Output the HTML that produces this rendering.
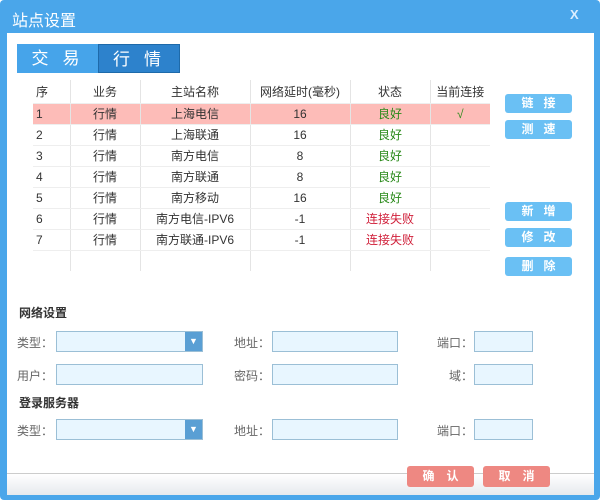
<!DOCTYPE html>
<html><head><meta charset="utf-8"><style>
*{margin:0;padding:0;box-sizing:border-box}
body{width:600px;height:500px;overflow:hidden;font-family:"Liberation Sans","Noto Sans CJK SC",sans-serif;font-size:12px;color:#333;background:#fff;position:relative}
.win{position:absolute;left:0;top:0;width:600px;height:500px;background:#4aa6ea;border-radius:4px}
.title{position:absolute;left:12px;top:7px;color:#fff;font-size:16px}
.x{position:absolute;left:570px;top:7px;color:#dbeeff;font-size:13px;font-weight:bold}
.body{position:absolute;left:7px;top:33px;width:587px;height:440px;background:#fff}
.foot{position:absolute;left:7px;top:473px;width:587px;height:22px;background:linear-gradient(#fff,#e6eaee);border-top:1px solid #ccc}
.a{position:absolute}
.tab{position:absolute;top:44px;height:29px;color:#fff;font-size:17px;text-align:center;line-height:29px;letter-spacing:14px;padding-left:10px}
table{position:absolute;left:33px;top:80px;border-collapse:collapse}
td{height:21px;text-align:center;border-left:1px solid #e4e4e4;border-bottom:1px solid #eee;font-size:12px;padding:0}
td:first-child{text-align:left;border-left:none;padding-left:3px}
tr.h td{height:23px}
tr.s td{background:#fdbcb8}
.g{color:#2a8a1a}.r{color:#d0203a}
.btn{position:absolute;left:505px;width:67px;height:19px;background:#6ac0f4;border-radius:3px;color:#fff;font-weight:bold;text-align:center;line-height:19px;letter-spacing:10px;padding-left:10px}
.lab{position:absolute;color:#666;font-size:12px}
.in{position:absolute;height:21px;background:#e8f6ff;border:1px solid #9bbfd6}
.dd{position:absolute;right:0;top:0;width:17px;height:19px;background:#5a9fd4;color:#fff;font-size:9px;text-align:center;line-height:19px}
.sec{position:absolute;left:19px;font-weight:bold;font-size:12px;color:#333}
.fb{position:absolute;top:466px;width:67px;height:21px;background:#ee8882;border-radius:3px;color:#fff;font-weight:bold;text-align:center;line-height:21px;letter-spacing:12px;padding-left:12px}
</style></head><body>
<div class="win"></div>
<div class="title">站点设置</div><div class="x">X</div>
<div class="body"></div>
<div class="foot"></div>
<div class="tab" style="left:17px;width:81px;background:#46a4ea">交易</div>
<div class="tab" style="left:98px;width:82px;background:#2d82cc;border:1px solid #1e6aaa">行情</div>
<table>
<tr class="h"><td style="width:37px">序</td><td style="width:70px">业务</td><td style="width:110px">主站名称</td><td style="width:100px">网络延时(毫秒)</td><td style="width:80px">状态</td><td style="width:60px">当前连接</td></tr>
<tr class="s"><td>1</td><td>行情</td><td>上海电信</td><td>16</td><td class="g">良好</td><td class="g">√</td></tr>
<tr><td>2</td><td>行情</td><td>上海联通</td><td>16</td><td class="g">良好</td><td></td></tr>
<tr><td>3</td><td>行情</td><td>南方电信</td><td>8</td><td class="g">良好</td><td></td></tr>
<tr><td>4</td><td>行情</td><td>南方联通</td><td>8</td><td class="g">良好</td><td></td></tr>
<tr><td>5</td><td>行情</td><td>南方移动</td><td>16</td><td class="g">良好</td><td></td></tr>
<tr><td>6</td><td>行情</td><td>南方电信-IPV6</td><td>-1</td><td class="r">连接失败</td><td></td></tr>
<tr><td>7</td><td>行情</td><td>南方联通-IPV6</td><td>-1</td><td class="r">连接失败</td><td></td></tr>
<tr><td style="height:20px;border-bottom:none"></td><td style="border-bottom:none"></td><td style="border-bottom:none"></td><td style="border-bottom:none"></td><td style="border-bottom:none"></td><td style="border-bottom:none"></td></tr>
</table>
<div class="btn" style="top:94px">链接</div>
<div class="btn" style="top:120px">测速</div>
<div class="btn" style="top:202px">新增</div>
<div class="btn" style="top:228px">修改</div>
<div class="btn" style="top:257px">删除</div>
<div class="sec" style="top:304px">网络设置</div>
<div class="lab" style="left:17px;top:334px">类型：</div><div class="in" style="left:56px;top:331px;width:147px"><div class="dd">▼</div></div>
<div class="lab" style="left:234px;top:334px">地址：</div><div class="in" style="left:272px;top:331px;width:126px"></div>
<div class="lab" style="left:437px;top:334px">端口：</div><div class="in" style="left:474px;top:331px;width:59px"></div>
<div class="lab" style="left:17px;top:367px">用户：</div><div class="in" style="left:56px;top:364px;width:147px"></div>
<div class="lab" style="left:234px;top:367px">密码：</div><div class="in" style="left:272px;top:364px;width:126px"></div>
<div class="lab" style="left:449px;top:367px">域：</div><div class="in" style="left:474px;top:364px;width:59px"></div>
<div class="sec" style="top:394px">登录服务器</div>
<div class="lab" style="left:17px;top:422px">类型：</div><div class="in" style="left:56px;top:419px;width:147px"><div class="dd">▼</div></div>
<div class="lab" style="left:234px;top:422px">地址：</div><div class="in" style="left:272px;top:419px;width:126px"></div>
<div class="lab" style="left:437px;top:422px">端口：</div><div class="in" style="left:474px;top:419px;width:59px"></div>
<div class="fb" style="left:407px">确认</div>
<div class="fb" style="left:483px">取消</div>
</body></html>
